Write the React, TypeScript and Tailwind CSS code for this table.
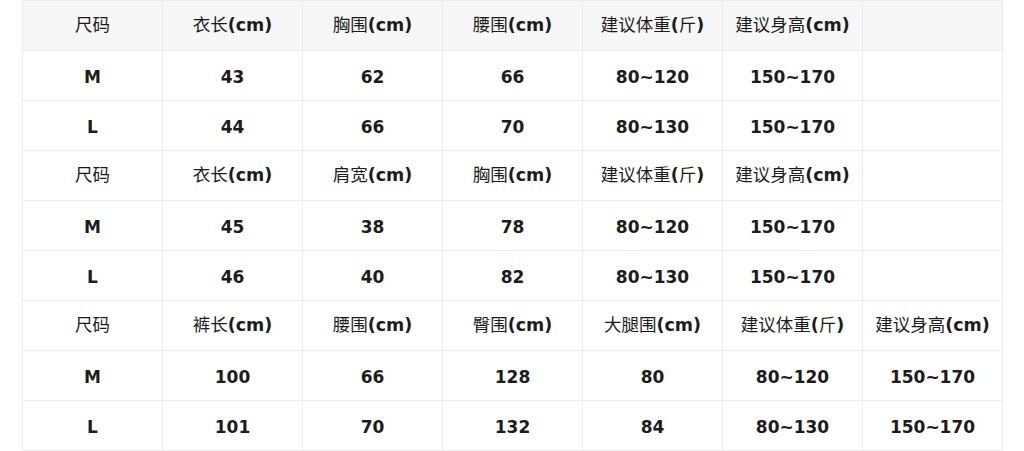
const sections = [
  {
    head: ["尺码", "衣长(cm)", "胸围(cm)", "腰围(cm)", "建议体重(斤)", "建议身高(cm)", ""],
    rows: [
      ["M", "43", "62", "66", "80~120", "150~170", ""],
      ["L", "44", "66", "70", "80~130", "150~170", ""],
    ],
  },
  {
    head: ["尺码", "衣长(cm)", "肩宽(cm)", "胸围(cm)", "建议体重(斤)", "建议身高(cm)", ""],
    rows: [
      ["M", "45", "38", "78", "80~120", "150~170", ""],
      ["L", "46", "40", "82", "80~130", "150~170", ""],
    ],
  },
  {
    head: ["尺码", "裤长(cm)", "腰围(cm)", "臀围(cm)", "大腿围(cm)", "建议体重(斤)", "建议身高(cm)"],
    rows: [
      ["M", "100", "66", "128", "80", "80~120", "150~170"],
      ["L", "101", "70", "132", "84", "80~130", "150~170"],
    ],
  },
];

// chinese glyphs regular, latin bits bold
const HeadText = ({ text }: { text: string }) => {
  const parts = text.split(/([\u4e00-\u9fff]+)/).filter(Boolean);
  return (
    <>
      {parts.map((p, i) =>
        /[\u4e00-\u9fff]/.test(p) ? (
          <span key={i} className="font-normal text-[17.5px]">{p}</span>
        ) : (
          <span key={i} className="font-bold text-[17.5px]">{p}</span>
        )
      )}
    </>
  );
};

export default function App() {
  return (
    <div className="w-[1024px] h-[451px] bg-white pl-[22px] overflow-hidden">
      <table
        className="table-fixed border-collapse w-[981px] text-[#1c1c1c]"
        style={{ fontFamily: '"DejaVu Sans", "Noto Sans CJK SC", sans-serif' }}
      >
        <tbody>
          {sections.map((s, si) => (
            <>
              <tr key={`h${si}`} className={si === 0 ? "bg-[#f7f7f8]" : "bg-white"}>
                {s.head.map((h, i) => (
                  <td
                    key={i}
                    className="w-[140px] h-[50px] border border-[#ececec] text-center align-middle leading-none pt-[1px] px-0 pb-0"
                  >
                    <HeadText text={h} />
                  </td>
                ))}
              </tr>
              {s.rows.map((r, ri) => (
                <tr key={`r${si}${ri}`}>
                  {r.map((c, i) => (
                    <td
                      key={i}
                      className="w-[140px] h-[50px] border border-[#ececec] text-center align-middle text-[17px] leading-none font-bold pt-[4px] px-0 pb-0"
                    >
                      {c}
                    </td>
                  ))}
                </tr>
              ))}
            </>
          ))}
        </tbody>
      </table>
    </div>
  );
}
